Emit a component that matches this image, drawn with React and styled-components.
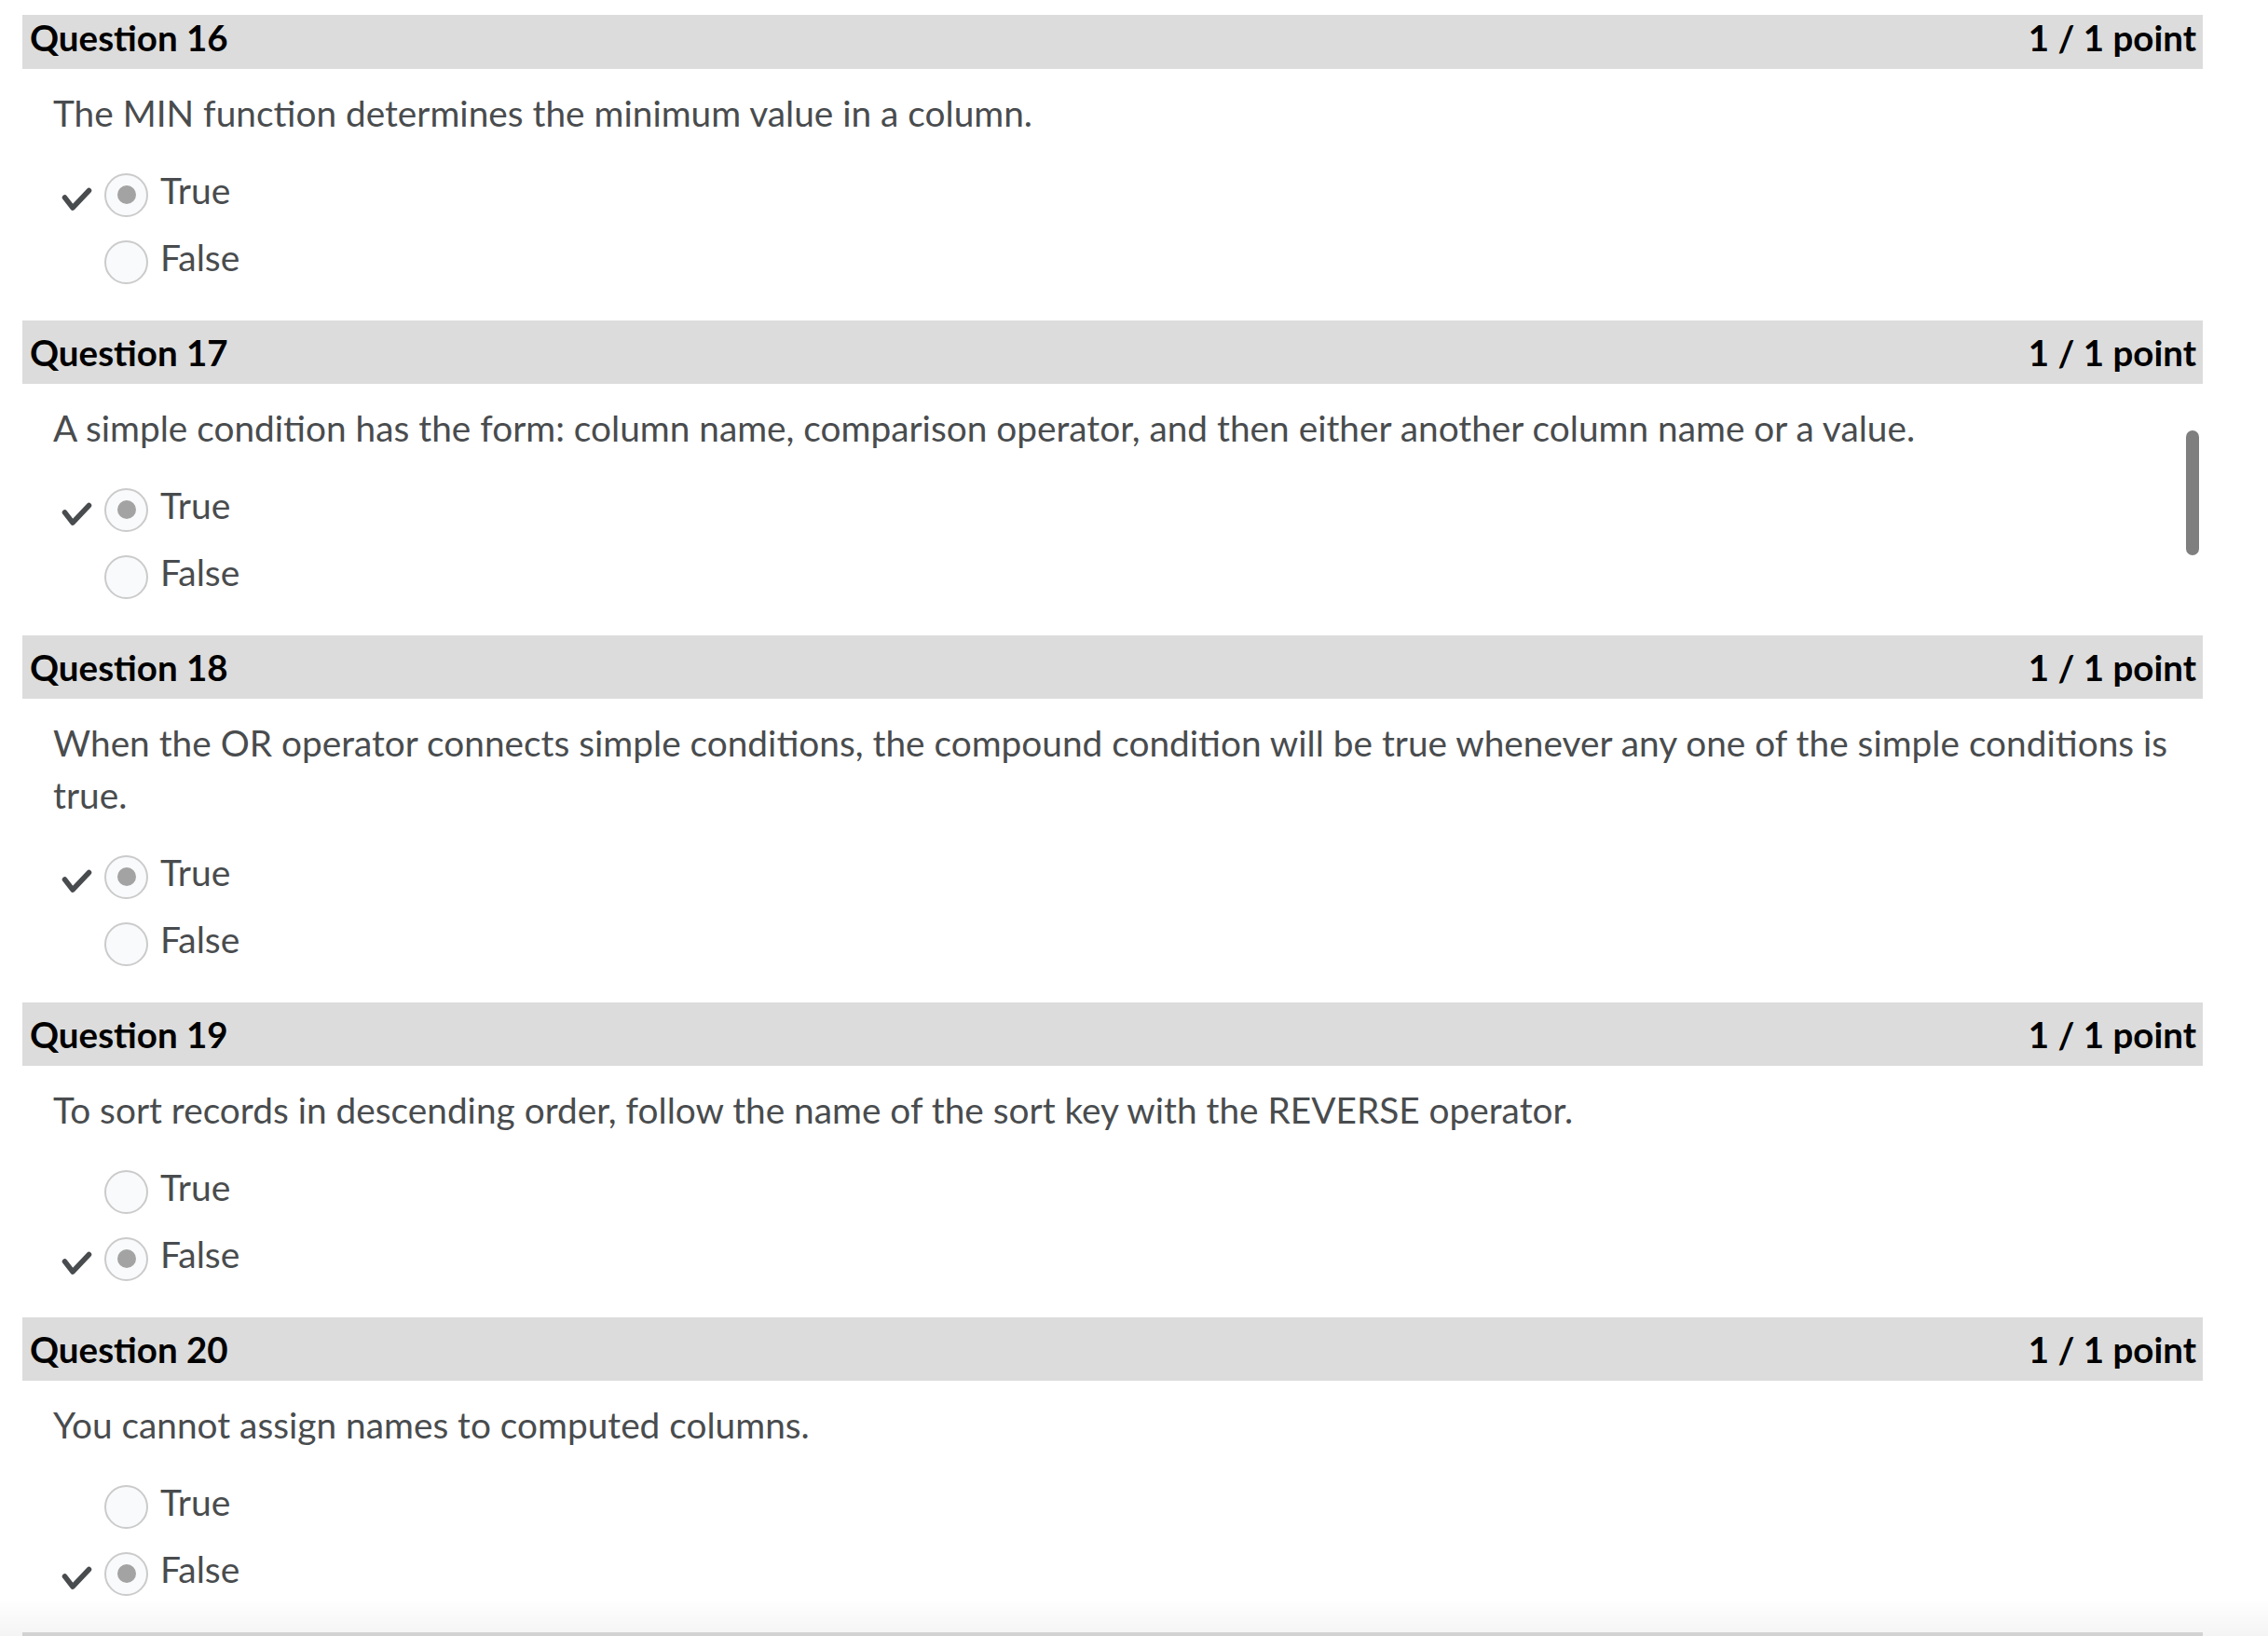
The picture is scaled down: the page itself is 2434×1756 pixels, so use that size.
import React from "react";
import styled, { createGlobalStyle } from "styled-components";

const GlobalStyle = createGlobalStyle`
  html, body {
    margin: 0;
    padding: 0;
    height: 1756px;
    overflow: hidden;
    background: #fff;
  }
  body {
    font-family: Lato, "Noto Sans", "Liberation Sans", sans-serif;
  }
`;

const Page = styled.main`
  position: relative;
  box-sizing: border-box;
  width: 2364px;
  height: 1756px;
  padding: 16px 0 0 24px;
  overflow: hidden;
`;

const Section = styled.section`
  display: flex;
  flex-direction: column;
`;

const Header = styled.div`
  display: flex;
  justify-content: space-between;
  align-items: ${p => (p.$cut ? "flex-end" : "center")};
  height: ${p => (p.$cut ? 58 : 68)}px;
  overflow: hidden;
  padding: 0 7px 0 8px;
  background: #dcdcdc;
`;

const HeaderText = styled.h2`
  margin: 0;
  font-size: 38.5px;
  font-weight: 700;
  line-height: 68px;
  color: #000;
`;

const Body = styled.div`
  padding: 19px 0 32px 33px;
`;

const Prompt = styled.p`
  margin: 0 0 19px;
  font-size: 38.8px;
  line-height: 56px;
  color: #494c4e;
`;

const Options = styled.div`
  display: flex;
  flex-direction: column;
`;

const Option = styled.label`
  display: flex;
  align-items: center;
  height: 72px;
  padding-left: 9px;
  font-size: 39px;
  color: #494c4e;
`;

const Check = styled.svg`
  width: 33px;
  height: 26px;
  margin-top: 20px;
  flex: none;
  visibility: ${p => (p.$show ? "visible" : "hidden")};
`;

const Radio = styled.span`
  box-sizing: border-box;
  width: 47px;
  height: 47px;
  margin: 10px 13px 0 13px;
  flex: none;
  display: flex;
  align-items: center;
  justify-content: center;
  border: 2px solid #cbcbcb;
  border-radius: 50%;
  background: #f9fafc;

  &::after {
    content: "";
    display: ${p => (p.$checked ? "block" : "none")};
    width: 20px;
    height: 20px;
    border-radius: 50%;
    background: #a3a3a3;
  }
`;

const Scrollbar = styled.div`
  position: absolute;
  left: 2346px;
  top: 462px;
  width: 14px;
  height: 134px;
  border-radius: 7px;
  background: #7f7f7f;
`;

const BottomShade = styled.div`
  position: fixed;
  left: 0;
  right: 0;
  bottom: 0;
  height: 40px;
  background: linear-gradient(to bottom, rgba(0, 0, 0, 0), rgba(0, 0, 0, 0.045));
  pointer-events: none;
`;

const questions = [
  { n: 16, text: "The MIN function determines the minimum value in a column.", answer: "True" },
  {
    n: 17,
    text: "A simple condition has the form: column name, comparison operator, and then either another column name or a value.",
    answer: "True",
  },
  {
    n: 18,
    text: "When the OR operator connects simple conditions, the compound condition will be true whenever any one of the simple conditions is true.",
    answer: "True",
  },
  {
    n: 19,
    text: "To sort records in descending order, follow the name of the sort key with the REVERSE operator.",
    answer: "False",
  },
  { n: 20, text: "You cannot assign names to computed columns.", answer: "False" },
];

const CheckIcon = ({ show }) => (
  <Check $show={show} viewBox="0 0 33 26" aria-hidden="true">
    <path
      d="M3.5 11 L12 22 L29.5 3.5"
      fill="none"
      stroke="#494c4e"
      strokeWidth="5.5"
      strokeLinecap="round"
      strokeLinejoin="round"
    />
  </Check>
);

const Question = ({ q, first }) => (
  <Section>
    <Header $cut={first}>
      <HeaderText>Question {q.n}</HeaderText>
      <HeaderText>1 / 1 point</HeaderText>
    </Header>
    <Body>
      <Prompt>{q.text}</Prompt>
      <Options>
        {["True", "False"].map(opt => (
          <Option key={opt}>
            <CheckIcon show={opt === q.answer} />
            <Radio $checked={opt === q.answer} />
            {opt}
          </Option>
        ))}
      </Options>
    </Body>
  </Section>
);

export default function App() {
  return (
    <>
      <GlobalStyle />
      <Page>
        {questions.map((q, i) => (
          <Question key={q.n} q={q} first={i === 0} />
        ))}
        {/* next question's header just peeking in at the bottom edge */}
        <Header />
        <Scrollbar />
      </Page>
      <BottomShade />
    </>
  );
}
